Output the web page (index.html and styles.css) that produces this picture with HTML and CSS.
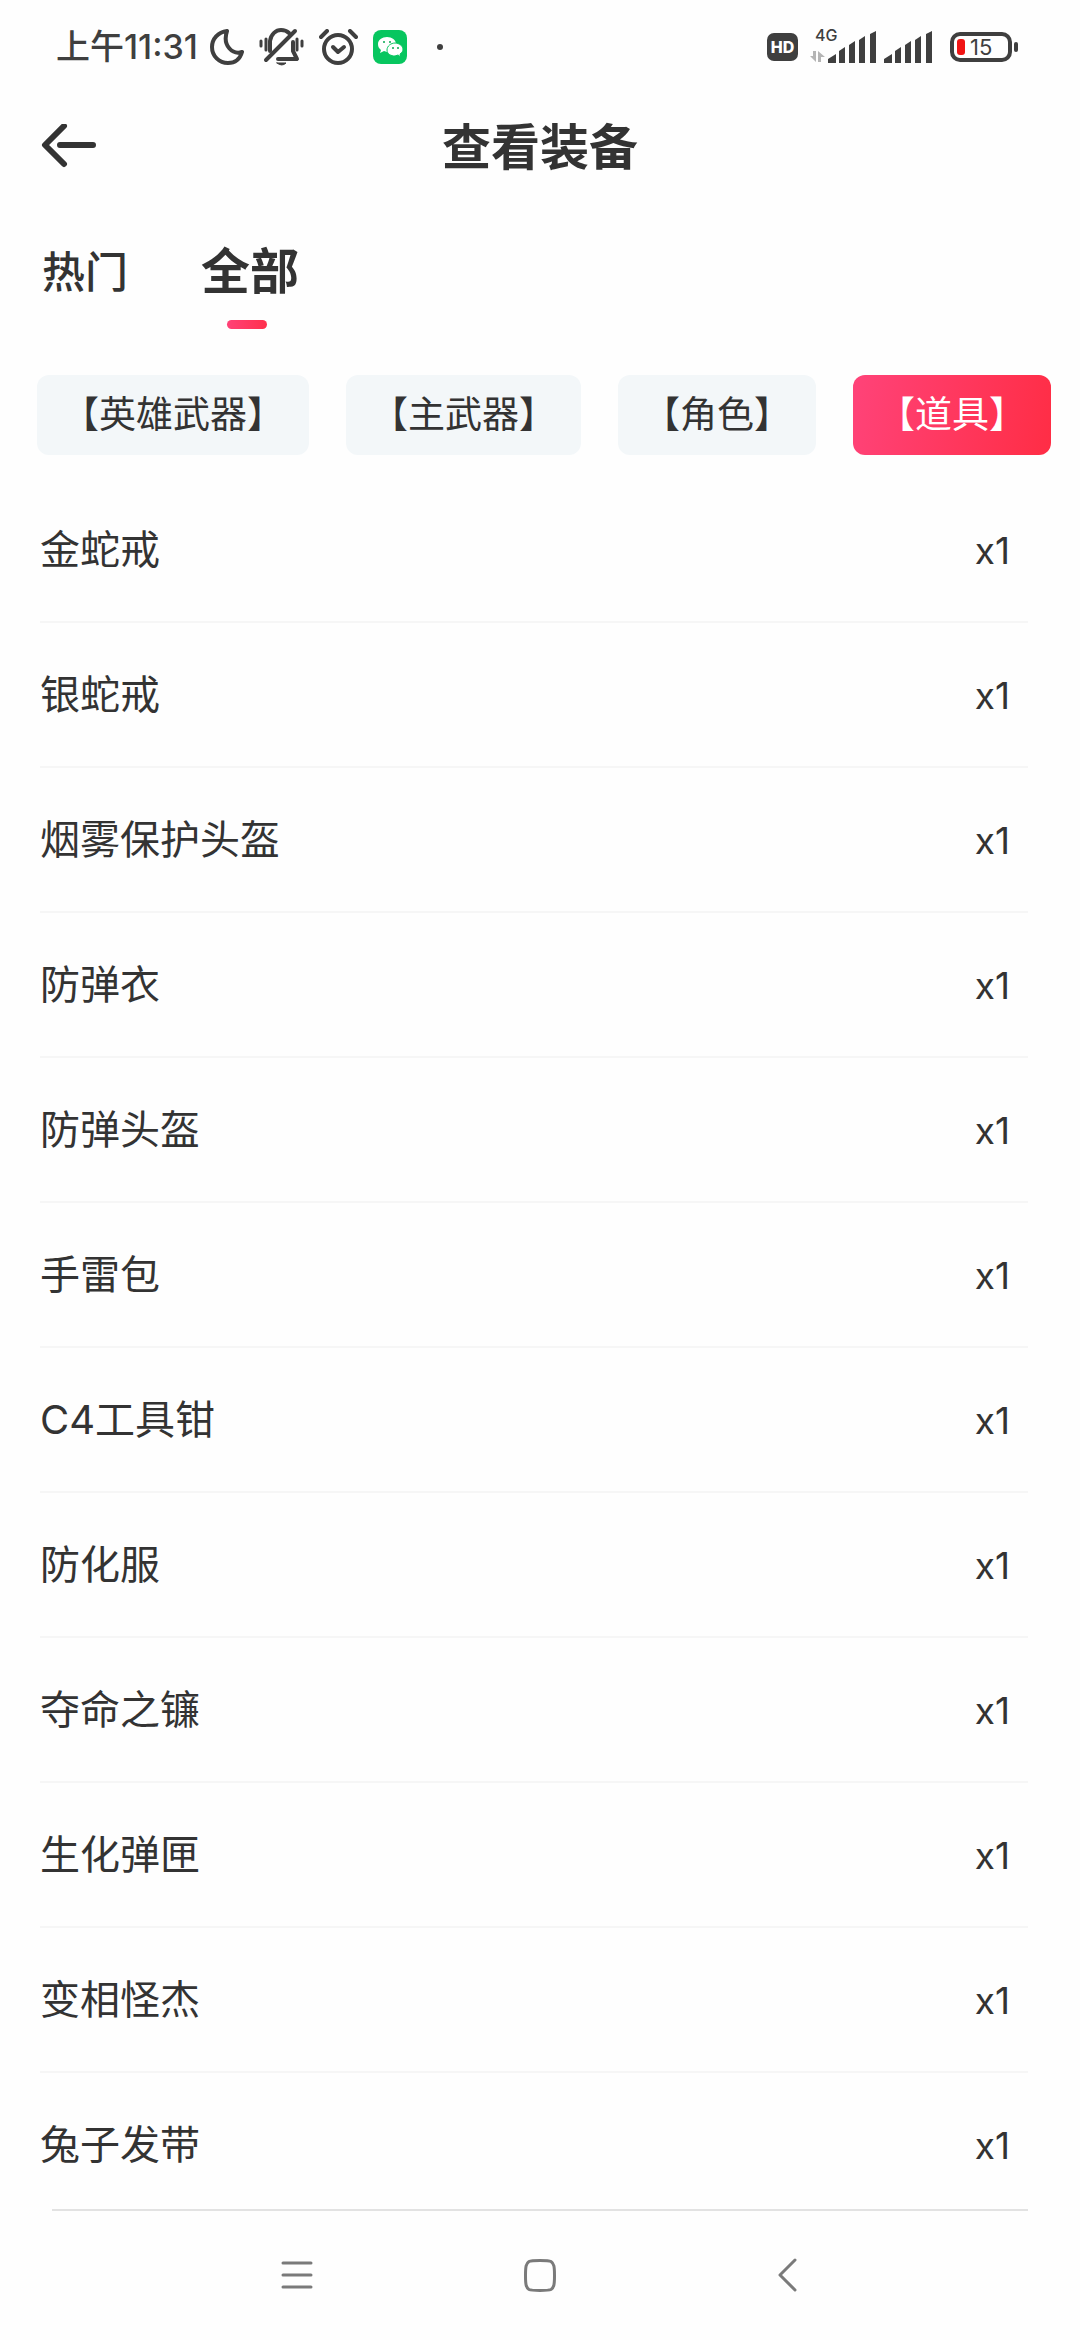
FILE: index.html
```html
<!DOCTYPE html>
<html lang="zh-CN">
<head>
  <meta charset="UTF-8">
  <meta name="viewport" content="width=device-width, initial-scale=1.0">
  <title>查看装备</title>
  <link rel="stylesheet" href="styles.css">
</head>
<body>
  <div class="app">
    <div class="status-bar">
      <div class="status-left">
        <span class="time">上午11:31</span>
        <svg width="34" height="36" viewBox="0 0 34 36" fill="none" stroke="#3f3f3f" stroke-width="4" stroke-linejoin="round">
          <path d="M17 2C8 3 2 10 2 18c0 9 7 16 16 16 7 0 12-4 14-11-9 3-20-6-15-21z"/>
        </svg>
        <svg width="45" height="38" viewBox="0 0 45 38" fill="none" stroke="#3f3f3f" stroke-width="4" stroke-linecap="round" stroke-linejoin="round">
          <path d="M7 32L36 3"/>
          <path d="M11 23V13C12 6 17 2 22 2c3 0 6 1 8 3"/>
          <path d="M34 14v9l4 8H19"/>
          <path d="M2 13v5M7 11v11M38 11v11M43 13v5" stroke-width="3"/>
          <path d="M18 35h9q-4 4-9 0z" fill="#3f3f3f" stroke-width="1"/>
        </svg>
        <svg width="39" height="37" viewBox="0 0 39 37" fill="none" stroke="#3f3f3f" stroke-width="4" stroke-linecap="round" stroke-linejoin="round">
          <circle cx="19" cy="20" r="14"/>
          <path d="M14 18l5 5 6-5"/>
          <path d="M2 8l6-6M31 2l6 6"/>
        </svg>
        <svg width="34" height="34" viewBox="0 0 34 34">
          <rect width="34" height="34" rx="8" fill="#07c65f"/>
          <path d="M14 7c-5 0-9 3-9 7 0 3 1 4 3 6l-1 3 4-2 3 1c5 0 9-4 9-8s-4-7-9-7z" fill="#fff"/>
          <path d="M22 13c-4 0-8 3-8 7s4 6 8 6l3-1 3 2-1-3c2-1 3-3 3-5 0-3-4-6-8-6z" fill="#fff" stroke="#07c65f" stroke-width="1"/>
          <g fill="#07a850">
            <circle cx="11" cy="12" r="1"/><circle cx="17" cy="12" r="1"/>
            <circle cx="20" cy="18" r="1"/><circle cx="25" cy="18" r="1"/>
          </g>
        </svg>
        <span class="more-dot"></span>
      </div>
      <div class="status-right">
        <span class="hd">HD</span>
        <div class="network">
          <span class="network-type">4G</span>
          <svg width="66" height="32" viewBox="0 0 66 32">
            <path d="M0 25h3v-5h3v11zM8 31V20l7 6h-4v5z" fill="#b5b5b5"/>
            <path d="M18 32v-4l8-5v9zM29 32V20l6-4v16zM39 32V14l6-4v22zM49 32V9l6-4v27zM60 32V3l6-3v32z" fill="#3f3f3f"/>
          </svg>
        </div>
        <svg width="48" height="32" viewBox="0 0 48 32" fill="#3f3f3f">
          <path d="M0 32v-4l8-5v9zM11 32V20l6-4v16zM21 32V14l6-4v22zM31 32V9l6-4v27zM42 32V3l6-3v32z"/>
        </svg>
        <div class="battery">
          <span class="battery-level"></span>
          <span>15</span>
        </div>
      </div>
    </div>

    <header class="header">
      <button class="back" aria-label="返回">
        <svg width="56" height="48" viewBox="0 0 56 48" fill="none" stroke="#333" stroke-width="6" stroke-linecap="round" stroke-linejoin="round">
          <path d="M24 2L5 21l19 19M20 21h33"/>
        </svg>
      </button>
      <h1>查看装备</h1>
    </header>

    <nav class="tabs">
      <button class="tab">热门</button>
      <button class="tab active">全部</button>
    </nav>

    <div class="filters">
      <button class="filter">【英雄武器】</button>
      <button class="filter">【主武器】</button>
      <button class="filter">【角色】</button>
      <button class="filter active">【道具】</button>
    </div>

    <ul class="list">
      <li><span>金蛇戒</span><span class="count">x1</span></li>
      <li><span>银蛇戒</span><span class="count">x1</span></li>
      <li><span>烟雾保护头盔</span><span class="count">x1</span></li>
      <li><span>防弹衣</span><span class="count">x1</span></li>
      <li><span>防弹头盔</span><span class="count">x1</span></li>
      <li><span>手雷包</span><span class="count">x1</span></li>
      <li><span>C4工具钳</span><span class="count">x1</span></li>
      <li><span>防化服</span><span class="count">x1</span></li>
      <li><span>夺命之镰</span><span class="count">x1</span></li>
      <li><span>生化弹匣</span><span class="count">x1</span></li>
      <li><span>变相怪杰</span><span class="count">x1</span></li>
      <li><span>兔子发带</span><span class="count">x1</span></li>
    </ul>

    <div class="system-nav">
      <button aria-label="菜单">
        <svg width="48" height="48" viewBox="0 0 48 48" fill="none" stroke="#7a7a7a" stroke-width="3" stroke-linecap="round">
          <path d="M10 11h28M10 23h28M10 35h28"/>
        </svg>
      </button>
      <button aria-label="主页">
        <svg width="48" height="48" viewBox="0 0 48 48" fill="none" stroke="#7a7a7a" stroke-width="3">
          <path d="M24 8.500c5 0 9 0 11 1 3 2 3.500 5 3.500 14s-.5 12-3.500 14c-2 1-6 1-11 1s-9 0-11-1c-3-2-3.500-5-3.500-14s.5-12 3.500-14c2-1 6-1 11-1z"/>
        </svg>
      </button>
      <button aria-label="后退">
        <svg width="48" height="48" viewBox="0 0 48 48" fill="none" stroke="#7a7a7a" stroke-width="3" stroke-linecap="round" stroke-linejoin="round">
          <path d="M36 8L21 23l15 15"/>
        </svg>
      </button>
    </div>
  </div>
</body>
</html>
```

FILE: styles.css
```css
* {
  box-sizing: border-box;
}

body {
  margin: 0;
  background: #fefefe;
  color: #333;
  font-family: Inter, "Noto Sans CJK SC", sans-serif;
}

button {
  padding: 0;
  border: none;
  background: none;
  color: inherit;
  font: inherit;
}

svg {
  display: block;
}

.app {
  display: flex;
  flex-direction: column;
  height: 100vh;
}

/* status bar */
.status-bar {
  display: flex;
  justify-content: space-between;
  align-items: center;
  height: 94px;
  padding: 0 62px 0 56px;
  color: #3f3f3f;
}

.status-left,
.status-right {
  display: flex;
  align-items: center;
}

.status-left {
  gap: 15px;
}

.time {
  margin-right: -3px;
  font-size: 34px;
  font-weight: 500;
  line-height: 40px;
}

.more-dot {
  width: 6px;
  height: 6px;
  margin-left: 15px;
  border-radius: 50%;
  background: #3f3f3f;
}

.hd {
  width: 31px;
  margin-right: 12px;
  border-radius: 7px;
  background: #3f3f3f;
  color: #fff;
  font-size: 16px;
  font-weight: 800;
  line-height: 28px;
  text-align: center;
}

.network {
  position: relative;
  margin-right: 8px;
}

.network-type {
  position: absolute;
  top: -4px;
  left: 5px;
  font-size: 16px;
  font-weight: 500;
  line-height: 16px;
}

.battery {
  position: relative;
  display: flex;
  align-items: center;
  gap: 5px;
  width: 62px;
  height: 30px;
  margin: 0 6px 0 18px;
  padding-left: 3px;
  border: 4px solid #3f3f3f;
  border-radius: 10px;
  font-size: 22px;
  line-height: 22px;
}

.battery::after {
  content: "";
  position: absolute;
  top: 6px;
  right: -10px;
  width: 4px;
  height: 10px;
  border-radius: 2px;
  background: #3f3f3f;
}

.battery-level {
  width: 8px;
  height: 16px;
  border-radius: 3px;
  background: #f01414;
}

/* page header */
.header {
  display: grid;
  grid-template-columns: 1fr auto 1fr;
  align-items: center;
  height: 108px;
  padding: 0 40px;
}

.back {
  justify-self: start;
}

h1 {
  margin: 0;
  font-size: 49px;
  font-weight: 700;
  line-height: 60px;
}

.tabs {
  display: flex;
  align-items: center;
  gap: 73px;
  height: 140px;
  padding: 0 42px;
}

.tab {
  position: relative;
  font-size: 43px;
  font-weight: 500;
  line-height: 60px;
}

.tab.active {
  font-size: 49px;
  font-weight: 600;
}

.tab.active::after {
  content: "";
  position: absolute;
  left: 26px;
  bottom: -27px;
  width: 40px;
  height: 9px;
  border-radius: 5px;
  background: linear-gradient(90deg, #ff4177, #ff304c);
}

.filters {
  display: flex;
  gap: 37px;
  padding: 33px 0 23px 37px;
  overflow: hidden;
}

.filter {
  flex: none;
  height: 80px;
  padding: 0 25px;
  border-radius: 12px;
  background: #f3f7f9;
  font-size: 37px;
  line-height: 80px;
  white-space: nowrap;
}

.filter.active {
  background: linear-gradient(100deg, #ff4379, #ff2d45);
  color: #fff;
}

.list {
  flex: 1;
  min-height: 0;
  margin: 0;
  padding: 0 52px 0 40px;
  overflow: hidden;
  list-style: none;
}

.list li {
  display: flex;
  justify-content: space-between;
  align-items: baseline;
  padding-right: 18px;
  border-bottom: 2px solid #f6f6f6;
  font-size: 40px;
  line-height: 143px;
}

.count {
  font-size: 37px;
  line-height: 1;
}

/* bottom navigation */
.system-nav {
  display: grid;
  grid-template-columns: repeat(3, 1fr);
  align-items: center;
  height: 131px;
  margin: 0 52px;
  padding: 0 123px;
  border-top: 2px solid #e2e2e2;
}

.system-nav button {
  justify-self: center;
}
```
